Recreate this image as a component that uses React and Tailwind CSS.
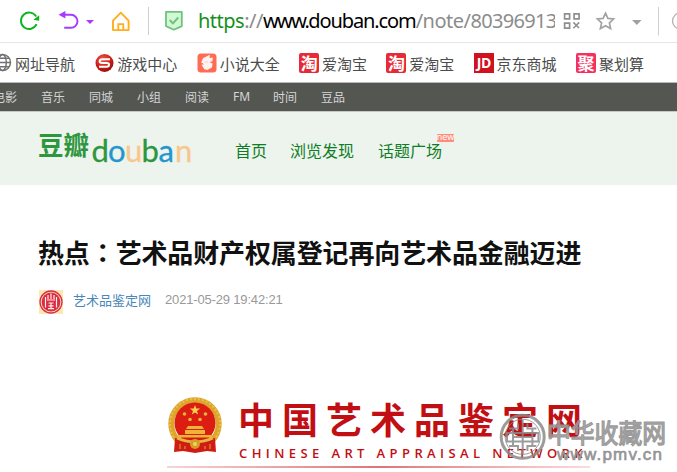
import { clsx } from "clsx";

const BOOKMARKS = [
  { label: "游戏中心", icon: "game" },
  { label: "小说大全", icon: "novel" },
  { label: "爱淘宝", icon: "tao" },
  { label: "爱淘宝", icon: "tao" },
  { label: "京东商城", icon: "jd" },
  { label: "聚划算", icon: "ju" },
];

const SITE_LINKS = ["电影", "音乐", "同城", "小组", "阅读", "FM", "时间", "豆品"];

const LOGO_LETTERS = [
  { char: "d", x: 91.5, color: "#2e963d" },
  { char: "o", x: 108, color: "#2496cd" },
  { char: "u", x: 125, color: "#f9c68f" },
  { char: "b", x: 141.5, color: "#2e963d" },
  { char: "a", x: 158.5, color: "#2496cd" },
  { char: "n", x: 175, color: "#f9c68f" },
];

function BookmarkIcon({ name }) {
  if (name === "game") {
    return (
      <svg width="20" height="20" viewBox="0 0 20 20" className="shrink-0">
        <defs>
          <radialGradient id="ball" cx="0.4" cy="0.3" r="0.75">
            <stop offset="0" stopColor="#f0574a" />
            <stop offset="0.6" stopColor="#cc1d15" />
            <stop offset="1" stopColor="#8e0d08" />
          </radialGradient>
        </defs>
        <circle cx="9.5" cy="10" r="9" fill="url(#ball)" />
        <path
          d="M15 6.3H7.6C5.4 6.3 4.6 7 4.6 8.2s.9 1.7 2.5 1.7h4.6c1.6 0 2.4.6 2.4 1.8s-.9 2-2.6 2H4"
          fill="none"
          stroke="#fff"
          strokeWidth="2"
        />
      </svg>
    );
  }
  if (name === "novel") {
    return (
      <svg width="20" height="20" viewBox="0 0 20 20" className="shrink-0">
        <rect x="0.5" y="0.5" width="19" height="19" rx="3.5" fill="#ff6c55" />
        <path
          d="M12.8 1.8 6 5.2 4.2 9.6l3 1.6-2.7.6 2.8 4.4 3 .9 4.6-2.6.7-4-3.2-1.4 3-.8.4-3.7-3.2.5z"
          fill="#fff"
          fillOpacity="0.92"
        />
        <path d="m8 9.2 3-.3" stroke="#ffc5ba" strokeWidth="1" />
      </svg>
    );
  }
  return (
    <span
      className={clsx(
        "flex h-5 w-5 shrink-0 items-center justify-center font-bold text-white",
        name === "tao" && "rounded-[2px] bg-[#e72b36] text-[17px]",
        name === "jd" && "bg-[#cf1120] font-['Open_Sans'] text-[14px] tracking-[-0.5px]",
        name === "ju" && "rounded-[2px] bg-[#f72f5d] text-[17px]",
      )}
    >
      {name === "tao" && "淘"}
      {name === "jd" && "JD"}
      {name === "ju" && "聚"}
    </span>
  );
}

function AddressBar() {
  return (
    <div className="flex h-[43px] items-center border-b border-[#e5e5e5] bg-white">
      <svg width="132" height="42" viewBox="0 0 132 42" fill="none" className="shrink-0">
        <path d="M36.6 24.2A8.2 8.2 0 1 1 36.2 16.6" stroke="#0cb51c" strokeWidth="1.9" />
        <path d="M39.2 15.2v5.6l-5.8-1.1z" fill="#0cb51c" />
        <path d="M63 14.8h8a6.5 6.5 0 0 1 0 13h-6.8" stroke="#a63aff" strokeWidth="1.9" />
        <path d="M65.4 11v7.6L58.6 14.8z" fill="#a63aff" />
        <path d="M86 20h8l-4 4z" fill="#a63aff" />
        <path
          d="M113 20.6 120.8 12.6l7.8 8v9.5H113z"
          stroke="#ffae1c"
          strokeWidth="1.9"
          strokeLinejoin="round"
        />
        <path d="M118.3 30v-5.8h5V30" stroke="#ffae1c" strokeWidth="1.8" />
      </svg>
      <div className="ml-4 h-7 w-px bg-[#cfcfcf]" />
      <svg width="20" height="22" viewBox="0 0 20 22" fill="none" className="ml-[15px] shrink-0">
        <path
          d="M2 1.9h15.8v14.2l-7.9 3.6L2 16.1z"
          fill="#d3f8d5"
          stroke="#6fc37c"
          strokeWidth="1.8"
          strokeLinejoin="round"
        />
        <path d="m5.7 10 3.2 3.4 5.4-5.9" stroke="#6fc37c" strokeWidth="2" />
      </svg>
      <div className="ml-[14px] h-[30px] w-[357px] overflow-hidden font-['Noto_Sans'] text-[20px] leading-[29px] tracking-[-0.5px] whitespace-nowrap text-[#8c8c8c]">
        <span className="text-[#15901c]">https</span>://
        <span className="text-black">
          <span className="tracking-[-1.6px]">www.</span>
          <span className="tracking-[-1.1px]">douban.com</span>
        </span>
        /note/<span className="tracking-[-0.7px]">80396913</span>
      </div>
      <svg width="122" height="42" viewBox="555 0 122 42" fill="none" className="shrink-0">
        <g stroke="#8f8f8f" strokeWidth="1.7">
          <path d="M564.6 13.8h5v5h-5zM574.1 13.8h5v5h-5zM564.6 23.1h5v5h-5z" />
          <path d="m573.4 22.4 5.6 5.6M579.2 22.4l-5.8 5.8" strokeWidth="1.5" />
        </g>
        <path
          d="m605.5 13.2 2.4 5.2 5.7.6-4.2 3.9 1.2 5.6-5.1-2.8-5.1 2.8 1.2-5.6-4.2-3.9 5.7-.6z"
          stroke="#a3a3a3"
          strokeWidth="1.7"
        />
        <path d="M632 20h9.6l-4.8 4.9z" fill="#a0a0a0" />
        <path d="M658.5 7v28.5" stroke="#cfcfcf" />
        <circle cx="680.5" cy="21" r="8" stroke="#b0b0b0" strokeWidth="1.3" />
      </svg>
    </div>
  );
}

function BookmarkBar() {
  return (
    <div className="flex h-10 items-center border-b border-[#b9b9b7] bg-white text-[15px] leading-5 whitespace-nowrap text-[#4c4c4c]">
      <svg width="12" height="20" viewBox="0 0 12 20" fill="none" stroke="#707070" strokeWidth="1.4" className="shrink-0">
        <circle cx="2.5" cy="9.5" r="8" />
        <ellipse cx="2.5" cy="9.5" rx="3.8" ry="8" />
        <path d="M-5 9.5h15.5M-4 5.2H9M-4 13.8H9" />
      </svg>
      <span className="ml-[3px] pt-0.5">网址导航</span>
      {BOOKMARKS.map((item, i) => (
        <div key={i} className="ml-[19.5px] flex items-center gap-[2.8px]">
          <BookmarkIcon name={item.icon} />
          <span className="pt-0.5">{item.label}</span>
        </div>
      ))}
    </div>
  );
}

function SiteHeader() {
  return (
    <header>
      <nav className="flex h-[28px] items-center gap-6 bg-[#545652] text-[12px] whitespace-nowrap text-[#d5d5d5]">
        {SITE_LINKS.map((label, i) => (
          <span key={label} className={clsx(i === 0 && "-ml-[7px]", label === "FM" && "w-4 font-['Noto_Sans']")}>
            {label}
          </span>
        ))}
      </nav>
      <div className="flex h-[74px] items-center border-t border-[#c4c9c3] bg-[#edf4ed]">
        <svg width="196" height="73" viewBox="0 112 196 73" className="shrink-0">
          <text
            x="38"
            y="155"
            fontSize="26"
            fontWeight="700"
            textLength="51"
            lengthAdjust="spacingAndGlyphs"
            fill="#2e963d"
          >
            豆瓣
          </text>
          {LOGO_LETTERS.map((l) => (
            <text key={l.x} x={l.x} y="162" fontSize="31" fontFamily="Lato" fill={l.color} stroke={l.color} strokeWidth="0.3">
              {l.char}
            </text>
          ))}
        </svg>
        <nav className="ml-[39px] flex gap-6 pt-0.5 text-[16px] leading-6 whitespace-nowrap text-[#0f7d27]">
          <span>首页</span>
          <span className="-ml-px">浏览发现</span>
          <span className="relative">
            话题广场
            <span className="absolute -top-[4px] left-[59px] flex h-2 w-[17px] items-center justify-center rounded-[1px] bg-[#ff8c78] pb-[2px] font-['Noto_Sans'] text-[9px] leading-none text-white">
              new
            </span>
          </span>
        </nav>
      </div>
    </header>
  );
}

function SealAvatar() {
  return (
    <svg width="24" height="24" viewBox="0 0 24 24" fill="none" className="shrink-0">
      <rect width="24" height="24" fill="#fce8b0" />
      <circle cx="12" cy="12" r="11" stroke="#d92b4b" strokeWidth="1.3" />
      <circle cx="12" cy="12" r="9.4" fill="#d92b4b" />
      <path
        d="M12 3.5v5.5M9 5v4M15 5v4M6.5 7v10.5M17.5 7v10.5M8 10h8M9.5 13h5M9.5 15.8h5M9 18.7h6M12 13v6"
        stroke="#fff3dc"
        strokeWidth="1.2"
      />
    </svg>
  );
}

function Emblem() {
  return (
    <svg width="56" height="60" viewBox="0 0 56 60" fill="none" className="shrink-0">
      <circle cx="28" cy="28" r="23.7" stroke="#dda52c" strokeWidth="6" />
      <circle cx="28" cy="28" r="25" stroke="#eac04c" strokeWidth="2" strokeDasharray="2 2" />
      <circle cx="28" cy="27" r="20.5" fill="#dc1d12" />
      <path d="m28 9 1.3 3.6h3.8L30 14.9l1.2 3.7-3.2-2.2-3.2 2.2 1.2-3.7-3.1-2.3h3.8z" fill="#f5cf4d" />
      <g fill="#eeb438">
        <circle cx="17.5" cy="18" r="1.8" />
        <circle cx="38.5" cy="18" r="1.8" />
        <circle cx="23" cy="23.5" r="1.8" />
        <circle cx="33" cy="23.5" r="1.8" />
        <path d="M21 30h14l2 3H19zM18 34h20v4H18zM11 39h34v2.5H11z" />
      </g>
      <path d="M8 42h40l1 14-9-1-12 2-12-2-9 1z" fill="#cf1c14" />
      <path d="M10 42c11 5 25 5 36 0" stroke="#e7b63c" strokeWidth="3" />
      <circle cx="28" cy="48" r="5" fill="#d79c27" />
      <circle cx="28" cy="48" r="2" fill="#f4d15a" />
      <path d="M13 48v5M18 50v3M38 50v3M43 48v5" stroke="#e0912a" strokeWidth="1.2" />
    </svg>
  );
}

function Watermark() {
  return (
    <svg width="180" height="56" viewBox="497 412 180 56" fill="none" className="absolute top-[412px] left-[497px]">
      <g stroke="#8b8b8b" opacity="0.85">
        <circle cx="522.7" cy="436.8" r="21.5" strokeWidth="3" />
        <circle cx="522.7" cy="436.8" r="17.6" strokeWidth="1" />
        <path
          d="M522.7 420v34M509 428.5h9v-5M536.4 428.5h-9v-5M507 433h31.4v8.5H507zM514 437h17.4M509 446h9v5M536.4 446h-9v5M513 429v17M532.4 429v17"
          strokeWidth="2"
        />
      </g>
      <text
        x="547"
        y="443"
        fontSize="26"
        textLength="119"
        lengthAdjust="spacingAndGlyphs"
        fill="#a8a8a8"
        stroke="#949494"
        strokeWidth="1.3"
        opacity="0.92"
      >
        中华收藏网
      </text>
      <text
        x="557"
        y="460"
        fontSize="17"
        fontFamily="Liberation Sans"
        textLength="105"
        fill="#9b9b9b"
        stroke="#8e8e8e"
        strokeWidth="0.6"
      >
        www.pmv.cn
      </text>
    </svg>
  );
}

export default function App() {
  return (
    <div className="relative h-[472px] w-[677px] overflow-hidden bg-white font-['Noto_Sans_CJK_SC',sans-serif]">
      <AddressBar />
      <BookmarkBar />
      <SiteHeader />
      <main className="pl-[38px]">
        <h1 className="pt-[48px] text-[26px] leading-[38px] font-bold tracking-[-0.13px] whitespace-nowrap text-[#111]">
          热点
          <span lang="zh-TW" className="font-['Noto_Sans_CJK_TC',sans-serif]">：</span>
          艺术品财产权属登记再向艺术品金融迈进
        </h1>
        <div className="mt-[19px] flex h-6 items-center pl-px whitespace-nowrap">
          <SealAvatar />
          <span className="ml-[10px] pb-1 text-[13px] leading-5 text-[#4a86b8]">艺术品鉴定网</span>
          <span className="ml-[14px] pb-1 font-['Liberation_Sans'] text-[13px] leading-5 tracking-[-0.17px] text-[#999]">
            2021-05-29 19:42:21
          </span>
        </div>
        <div className="mt-[82px] flex pl-[129px]">
          <Emblem />
          <div className="ml-[15px] whitespace-nowrap text-[#c20f14]">
            <div className="pt-[2px] text-[36px] leading-[40px] font-bold tracking-[8px]">中国艺术品鉴定网</div>
            <div className="mt-[6px] ml-px font-['Open_Sans'] text-[13px] leading-[18px] font-semibold tracking-[4.4px]">
              CHINESE ART APPRAISAL NETWORK
            </div>
          </div>
        </div>
        <div className="mt-1 ml-[129px] h-[2px] w-[423px] bg-linear-to-r from-[#f6d5d5] via-[#dd7478] to-[#f9dcdc]" />
      </main>
      <Watermark />
    </div>
  );
}
